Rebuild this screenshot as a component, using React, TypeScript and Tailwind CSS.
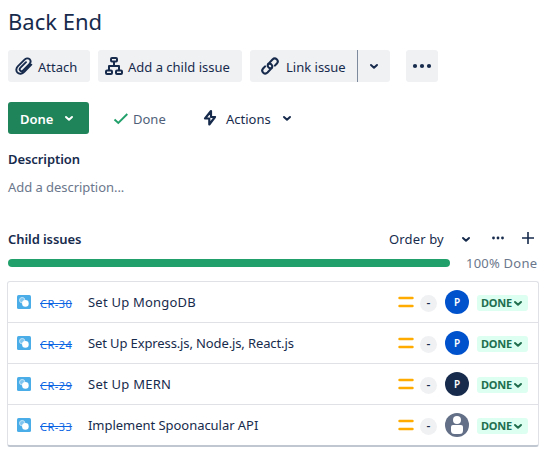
import React from "react";

function Chevron({ className = "" }: { className?: string }) {
  return (
    <svg className={className} width="10" height="7" viewBox="0 0 10 7" fill="none" stroke="currentColor" strokeWidth="2" strokeLinecap="round" strokeLinejoin="round">
      <path d="M2 2 5 4.800 8 2" />
    </svg>
  );
}

function AttachIcon() {
  return (
    <svg width="18" height="18" viewBox="0 0 18 18" fill="none" stroke="currentColor" strokeWidth="1.9" strokeLinecap="round" strokeLinejoin="round">
      <path d="M16.300 7.700 9.300 14.900C7.200 17 4.300 17.500 2.500 15.700C.7 13.900 1.100 11 3 9.100L9.300 2.800C10.900 1.200 13.200 .8 14.600 2.200C16 3.600 15.700 5.700 14.100 7.300L8.100 13.300C7.200 14.200 6 14.400 5.200 13.600C4.400 12.800 4.600 11.600 5.500 10.700L11 5.200" />
    </svg>
  );
}

function TreeIcon() {
  return (
    <svg width="18" height="18" viewBox="0 0 18 18" fill="none" stroke="currentColor" strokeWidth="2" strokeLinejoin="round">
      <rect x="6" y="1" width="6" height="3.500" rx="1" />
      <rect x="1" y="13.500" width="6" height="3.500" rx="1" />
      <rect x="11" y="13.500" width="6" height="3.500" rx="1" />
      <path d="M9 4.500V9M4 13.500V9H14V13.500" />
    </svg>
  );
}

function LinkIcon() {
  return (
    <svg width="18" height="18" viewBox="0 0 18 18" fill="none" stroke="currentColor" strokeWidth="2.100" strokeLinecap="round" strokeLinejoin="round">
      <path d="M10.600 10.900C9.300 11.600 7.900 11.100 7.200 10C6.500 8.900 6.700 7.500 7.600 6.600L11.500 2.500C12.700 1.300 14.500 1.200 15.700 2.300C17 3.500 17 5.300 15.900 6.500L13.900 8.600" />
      <path d="M7.400 7.100C8.700 6.400 10.100 6.900 10.800 8C11.500 9.100 11.300 10.500 10.400 11.400L6.500 15.500C5.300 16.700 3.500 16.800 2.300 15.700C1 14.500 1 12.700 2.100 11.500L4.100 9.400" />
    </svg>
  );
}

function Dots({ small = false }: { small?: boolean }) {
  return small ? (
    <svg width="14" height="4" viewBox="0 0 14 4" fill="currentColor">
      <circle cx="2.500" cy="2" r="1.400" /><circle cx="7" cy="2" r="1.400" /><circle cx="11.500" cy="2" r="1.400" />
    </svg>
  ) : (
    <svg width="20" height="6" viewBox="0 0 20 6" fill="currentColor">
      <circle cx="3" cy="3" r="2.100" /><circle cx="10" cy="3" r="2.100" /><circle cx="17" cy="3" r="2.100" />
    </svg>
  );
}

function TypeIcon() {
  return (
    <svg width="14" height="14" viewBox="0 0 14 14">
      <rect width="14" height="14" rx="1.500" fill="#4bade8" />
      <circle cx="5.200" cy="5.200" r="2.700" fill="#7fc5ef" stroke="#c5e5f8" strokeWidth="1" />
      <circle cx="8.400" cy="8.400" r="3.300" fill="#fff" />
    </svg>
  );
}

function Avatar({ kind }: { kind: string }) {
  if (kind === "none")
    return (
      <svg width="24" height="24" viewBox="0 0 24 24">
        <circle cx="12" cy="12" r="12" fill="#626f86" />
        <circle cx="12" cy="7" r="4" fill="#fff" />
        <path d="M6 14Q6 12 8 12H16Q18 12 18 14V17.500Q18 21 14.500 21H9.500Q6 21 6 17.500Z" fill="#fff" />
      </svg>
    );
  return (
    <div className={`flex h-6 w-6 items-center justify-center rounded-full pb-px text-[10px] font-semibold leading-none text-white ${kind === "blue" ? "bg-[#0052cc]" : "bg-[#172b4d]"}`}>P</div>
  );
}

const issues = [
  { id: "CR-30", title: "Set Up MongoDB", avatar: "blue", spacing: "tracking-[0.22px]" },
  { id: "CR-24", title: "Set Up Express.js, Node.js, React.js", avatar: "blue", spacing: "tracking-[-0.12px]" },
  { id: "CR-29", title: "Set Up MERN", avatar: "navy", spacing: "tracking-[0.25px]" },
  { id: "CR-33", title: "Implement Spoonacular API", avatar: "none", spacing: "tracking-[-0.04px]" },
];

export default function App() {
  return (
    <main className="h-[453px] w-[548px] overflow-hidden bg-white pl-2 pt-[5px] font-['Noto_Sans','Open_Sans',sans-serif] text-[13px] leading-5 text-[#172b4d]">
      <h1 className="h-8 whitespace-nowrap text-[22px] leading-8">Back End</h1>

      <div className="mt-[13px] flex h-8 whitespace-nowrap">
        <button className="flex w-[82px] items-center rounded-[3px] bg-[#f0f1f3] pl-[7px]">
          <AttachIcon /><span className="ml-[5px] mt-px">Attach</span>
        </button>
        <button className="ml-2 flex w-36 items-center rounded-[3px] bg-[#f0f1f3] pl-[7px]">
          <TreeIcon /><span className="ml-[5px] mt-px">Add a child issue</span>
        </button>
        <button className="ml-2 flex w-[107px] items-center rounded-l-[3px] bg-[#f0f1f3] pl-[11px]">
          <LinkIcon /><span className="ml-[7px] mt-px">Link issue</span>
        </button>
        <button className="flex w-[33px] items-center justify-center rounded-r-[3px] border-l border-[#7d899c] bg-[#f0f1f3]"><Chevron /></button>
        <button className="ml-4 flex w-8 items-center justify-center rounded-[3px] bg-[#f0f1f3]"><Dots /></button>
      </div>

      <div className="mt-5 flex h-8 items-center whitespace-nowrap">
        <button className="flex h-8 w-[81px] items-center rounded-[3px] bg-[#1f845a] pl-3 text-white">
          <span className="mt-0.5 w-[34px] text-left font-semibold">Done</span><Chevron className="ml-[10px]" />
        </button>
        <svg className="ml-6 mt-px" width="16" height="12" viewBox="0 0 16 12" fill="none" stroke="#22a06b" strokeWidth="1.900"><path d="M1.500 6.500 5.300 10 14.300 1" /></svg>
        <span className="ml-1 mt-0.5 w-[35px] text-[#505f79]">Done</span>
        <svg className="ml-[35px]" width="14" height="18" viewBox="0 0 14 18" fill="none" stroke="currentColor" strokeWidth="2.200" strokeLinejoin="round"><path d="M8 2 2 9.500H6.300V15.500L12 8H8Z" /></svg>
        <span className="ml-[9px] mt-0.5 w-[46px]">Actions</span><Chevron className="ml-[10px]" />
      </div>

      <h2 className="mt-[15px] h-5 font-semibold tracking-[-0.08px]">Description</h2>
      <p className="mt-2 h-5 tracking-[-0.05px] text-[#6b778c]">Add a description...</p>

      <div className="mt-8 flex h-5 items-center">
        <h2 className="w-[381px] font-semibold tracking-[-0.08px]">Child issues</h2>
        <span className="w-[56px] whitespace-nowrap tracking-[0.15px]">Order by</span><Chevron className="ml-4" />
        <span className="-mt-[3px] ml-[20px] flex"><Dots small /></span>
        <svg className="-mt-[2px] ml-[17px]" width="12" height="12" viewBox="0 0 12 12" stroke="currentColor" strokeWidth="1.600"><path d="M6 0V12M0 6H12" /></svg>
      </div>

      <div className="mt-[3px] flex h-[22px] items-center">
        <div className="h-2 w-[442px] rounded-full bg-[#22a06b]" />
        <span className="-mt-px ml-4 whitespace-nowrap tracking-[0.22px] text-[#6b778c]">100% Done</span>
      </div>

      <div className="-ml-px mt-[7px] w-[532px] divide-y divide-[#dfe1e6] rounded-[3px] border border-b-2 border-[#dfe1e6] border-b-[#c1c7d0]">
        {issues.map((issue) => (
          <div key={issue.id} className="flex h-[41px] items-center whitespace-nowrap pl-[9px] last:h-10">
            <TypeIcon />
            <a className="ml-[9px] mt-[3px] w-12 text-[11px] tracking-[0.45px] text-[#0c66e4]"><span className="line-through">{issue.id}</span></a>
            <span className={`w-[310px] ${issue.spacing}`}>{issue.title}</span>
            <svg width="16" height="12" viewBox="0 0 16 12" stroke="#ffab00" strokeWidth="2.400" strokeLinecap="round"><path d="M1.500 2H14.500M1.500 10H14.500" /></svg>
            <span className="ml-1.5 mt-0.5 flex h-[17px] w-[17px] items-center justify-center rounded-full bg-[#f0f1f3] text-xs font-medium leading-none">-</span>
            <span className="ml-2"><Avatar kind={issue.avatar} /></span>
            <span className="ml-2 mt-0.5 flex h-4 w-[51px] items-center rounded-[3px] bg-[#dcfff1] pl-1 text-[11px] font-bold leading-4 tracking-[-0.25px] text-[#216e4e]">
              <span className="w-8">DONE</span><Chevron />
            </span>
          </div>
        ))}
      </div>
    </main>
  );
}
